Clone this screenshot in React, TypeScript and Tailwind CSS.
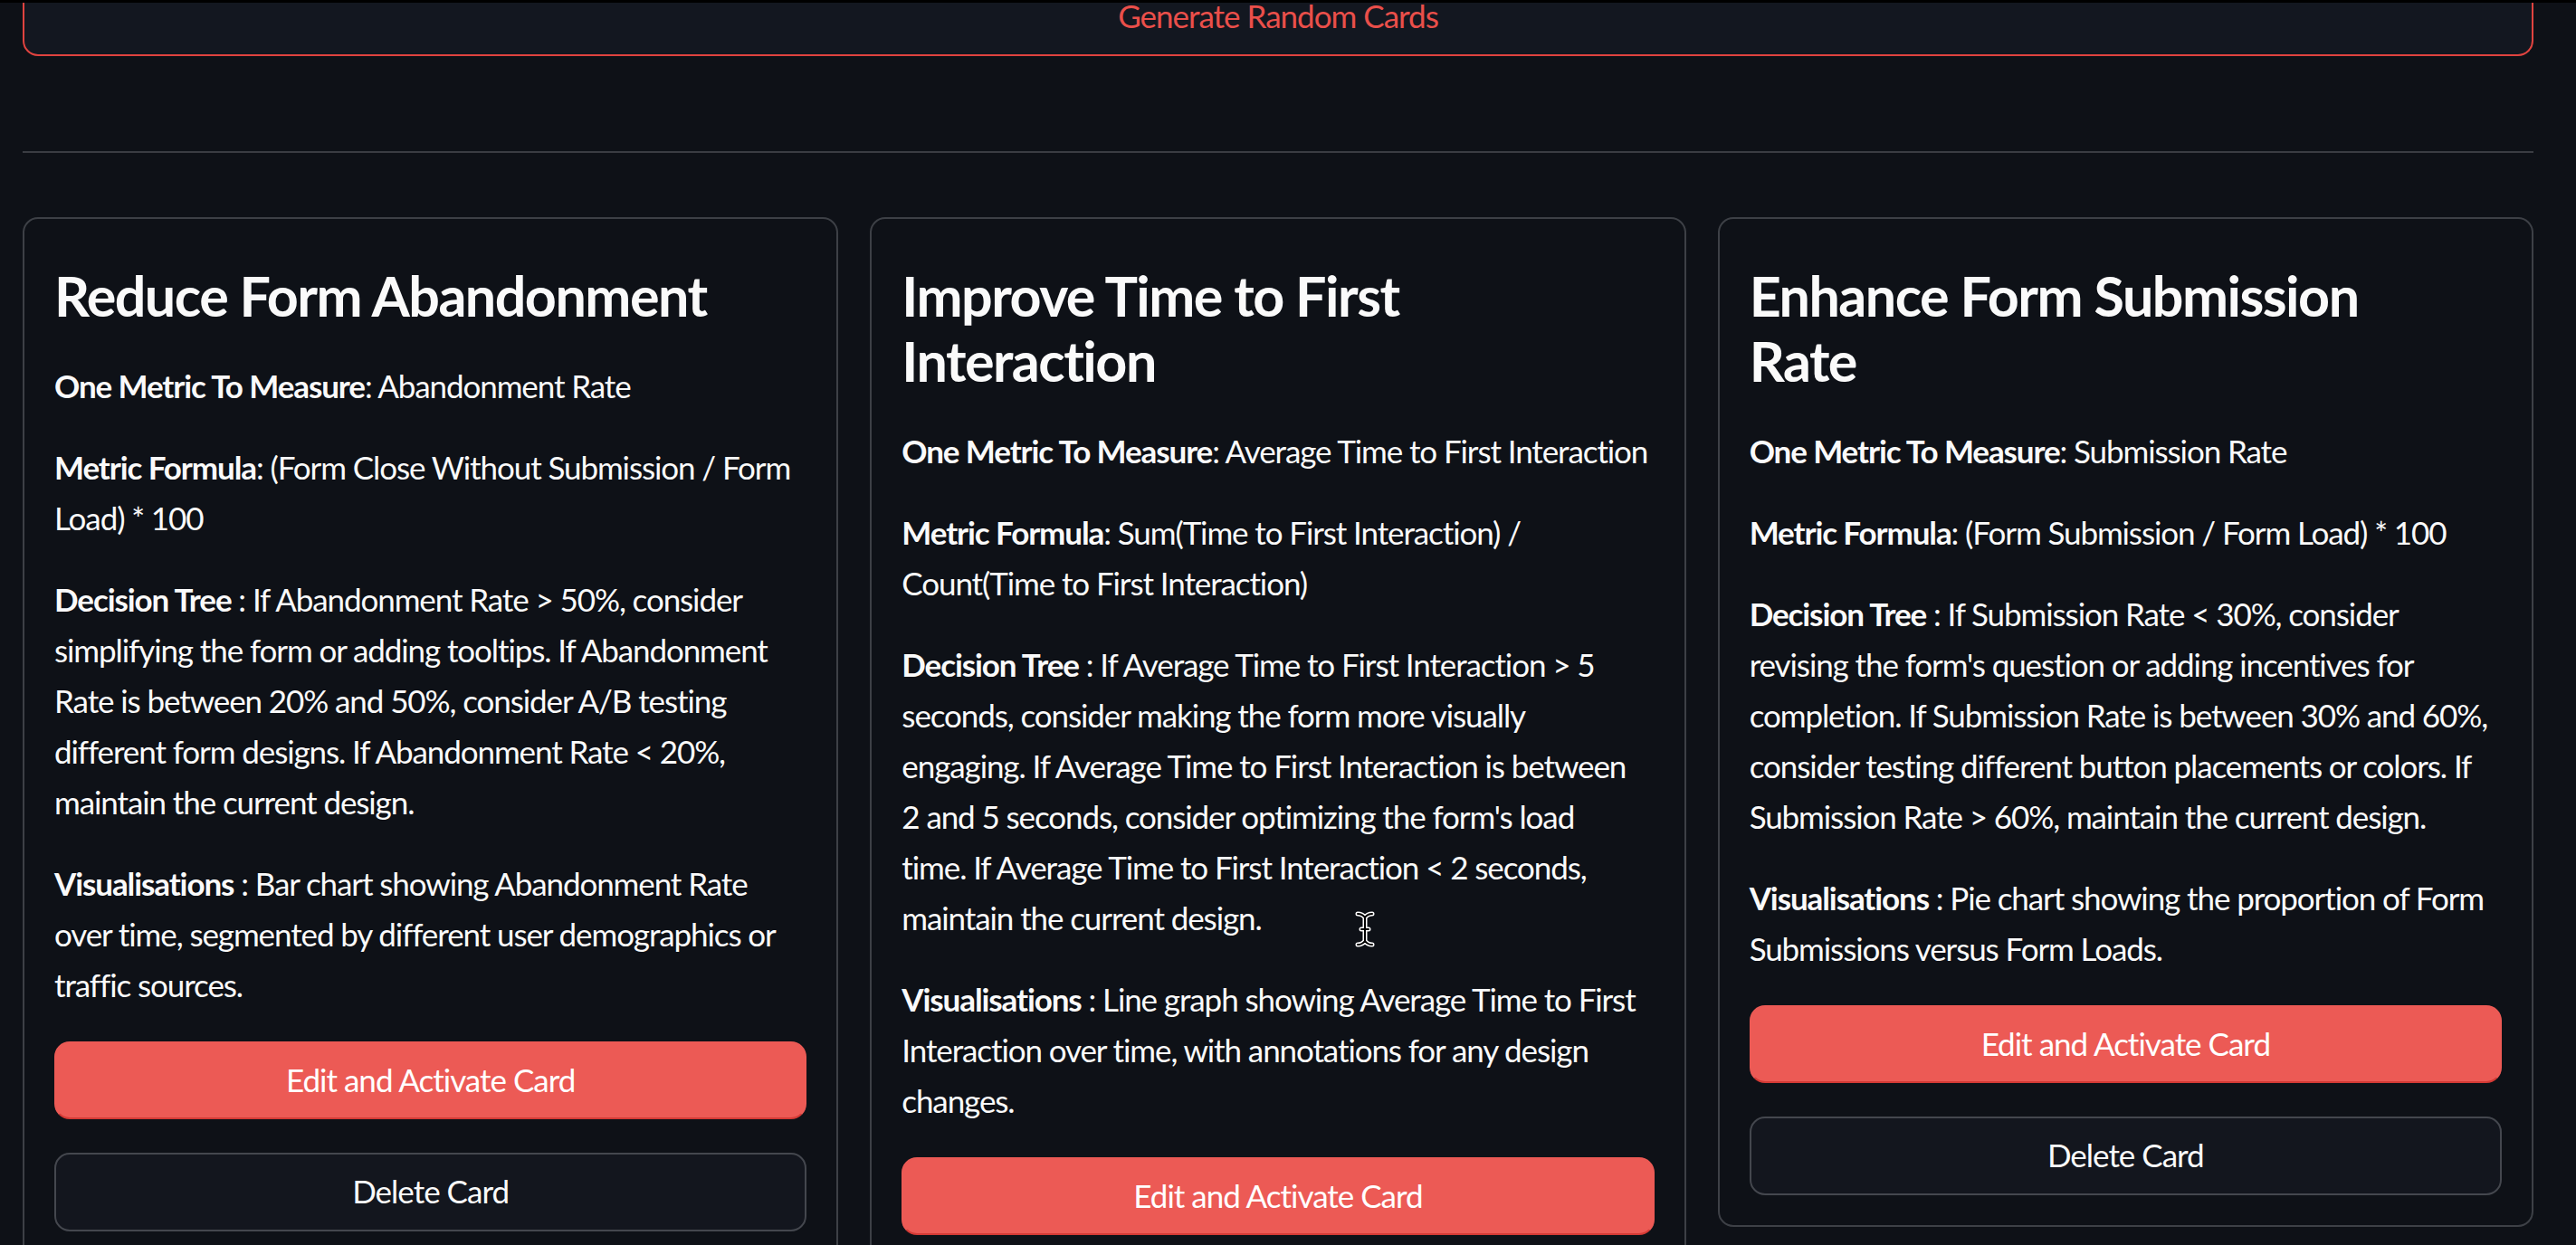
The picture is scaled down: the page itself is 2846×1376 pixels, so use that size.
import React from "react";

type Para = { label: string; sep: string; lines: string[] };
type CardData = { title: string[]; paras: Para[]; showDelete: boolean };

const cards: CardData[] = [
  {
    title: ["Reduce Form Abandonment"],
    paras: [
      { label: "One Metric To Measure", sep: ": ", lines: ["Abandonment Rate"] },
      { label: "Metric Formula", sep: ": ", lines: ["(Form Close Without Submission / Form", "Load) * 100"] },
      {
        label: "Decision Tree",
        sep: " : ",
        lines: [
          "If Abandonment Rate > 50%, consider",
          "simplifying the form or adding tooltips. If Abandonment",
          "Rate is between 20% and 50%, consider A/B testing",
          "different form designs. If Abandonment Rate < 20%,",
          "maintain the current design.",
        ],
      },
      {
        label: "Visualisations",
        sep: " : ",
        lines: ["Bar chart showing Abandonment Rate", "over time, segmented by different user demographics or", "traffic sources."],
      },
    ],
    showDelete: true,
  },
  {
    title: ["Improve Time to First", "Interaction"],
    paras: [
      { label: "One Metric To Measure", sep: ": ", lines: ["Average Time to First Interaction"] },
      { label: "Metric Formula", sep: ": ", lines: ["Sum(Time to First Interaction) /", "Count(Time to First Interaction)"] },
      {
        label: "Decision Tree",
        sep: " : ",
        lines: [
          "If Average Time to First Interaction > 5",
          "seconds, consider making the form more visually",
          "engaging. If Average Time to First Interaction is between",
          "2 and 5 seconds, consider optimizing the form's load",
          "time. If Average Time to First Interaction < 2 seconds,",
          "maintain the current design.",
        ],
      },
      {
        label: "Visualisations",
        sep: " : ",
        lines: ["Line graph showing Average Time to First", "Interaction over time, with annotations for any design", "changes."],
      },
    ],
    showDelete: true,
  },
  {
    title: ["Enhance Form Submission", "Rate"],
    paras: [
      { label: "One Metric To Measure", sep: ": ", lines: ["Submission Rate"] },
      { label: "Metric Formula", sep: ": ", lines: ["(Form Submission / Form Load) * 100"] },
      {
        label: "Decision Tree",
        sep: " : ",
        lines: [
          "If Submission Rate < 30%, consider",
          "revising the form's question or adding incentives for",
          "completion. If Submission Rate is between 30% and 60%,",
          "consider testing different button placements or colors. If",
          "Submission Rate > 60%, maintain the current design.",
        ],
      },
      {
        label: "Visualisations",
        sep: " : ",
        lines: ["Pie chart showing the proportion of Form", "Submissions versus Form Loads."],
      },
    ],
    showDelete: true,
  },
];

function Paragraph({ p }: { p: Para }) {
  return (
    <p className="mb-[34px] text-[35px] leading-[56px] whitespace-nowrap tracking-[-1.1px]">
      {p.lines.map((line, i) => (
        <React.Fragment key={i}>
          {i === 0 && <span className="font-bold">{p.label}</span>}
          {i === 0 && p.sep}
          {line}
          {i < p.lines.length - 1 && <br />}
        </React.Fragment>
      ))}
    </p>
  );
}

function Card({ c }: { c: CardData }) {
  return (
    <div className="flex flex-col rounded-[17px] border-2 border-[#3d4046] p-[33px]">
      <h3 className="pt-[16px] pb-[35px] text-[61px] leading-[72px] font-bold tracking-[-1.5px] whitespace-nowrap">
        {c.title.map((t, i) => (
          <React.Fragment key={i}>
            {t}
            {i < c.title.length - 1 && <br />}
          </React.Fragment>
        ))}
      </h3>
      {c.paras.map((p, i) => (
        <Paragraph key={i} p={p} />
      ))}
      <button className="mt-[1px] flex h-[86px] w-full items-center justify-center rounded-[17px] border-2 border-[#ec5a55] border-b-[#d43a35] bg-[#ec5a55] pb-[2px] text-[35px] tracking-[-1px] text-white">
        Edit and Activate Card
      </button>
      {c.showDelete && (
        <button className="mt-[37px] flex h-[87px] w-full items-center justify-center rounded-[17px] border-2 border-[#44474e] bg-[#13161e] pb-[2px] text-[35px] tracking-[-1px] text-[#fafafa]">
          Delete Card
        </button>
      )}
    </div>
  );
}

export default function App() {
  return (
    <div className="relative h-[1376px] w-[2846px] overflow-hidden bg-[#0e1117] text-[#fafafa] font-['Lato',sans-serif]">
      <div className="pl-[25px] pr-[47px]">
        <button className="mt-[-22px] flex h-[84px] w-full items-center justify-center rounded-[17px] border-2 border-[#e0433f] bg-[#131720] pb-[6px] text-[35px] tracking-[-1px] text-[#ea4f4a]">
          Generate Random Cards
        </button>
        <div className="mt-[105px] h-[2px] bg-[#3a3c42]" />
        <div className="mt-[71px] grid grid-cols-3 items-start gap-[35px]">
          {cards.map((c, i) => (
            <Card key={i} c={c} />
          ))}
        </div>
      </div>
      <div className="absolute left-0 right-0 top-0 h-[3px] bg-black" />
      <svg className="absolute left-[1497px] top-[1007px]" width="22" height="40" viewBox="0 0 22 40">
        <path
          d="M3 3 Q8 3 11 7 Q14 3 19 3 M11 7 L11 33 M3 37 Q8 37 11 33 Q14 37 19 37 M7 20 L15 20"
          fill="none"
          stroke="#fff"
          strokeWidth="5"
          strokeLinecap="round"
        />
        <path
          d="M3 3 Q8 3 11 7 Q14 3 19 3 M11 7 L11 33 M3 37 Q8 37 11 33 Q14 37 19 37 M7 20 L15 20"
          fill="none"
          stroke="#000"
          strokeWidth="2"
          strokeLinecap="round"
        />
      </svg>
    </div>
  );
}
